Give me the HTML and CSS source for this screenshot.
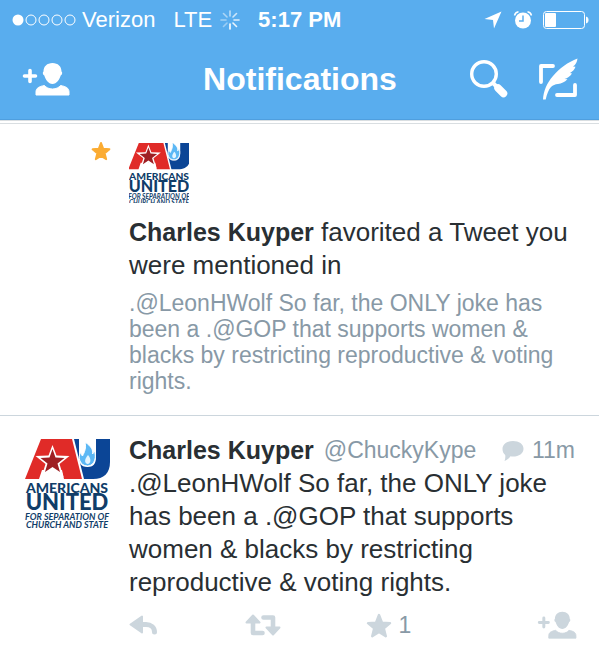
FILE: index.html
```html
<!DOCTYPE html>
<html lang="en">
<head>
<meta charset="utf-8">
<meta name="viewport" content="width=device-width, initial-scale=1">
<title>Notifications</title>
<link rel="stylesheet" href="styles.css">
</head>
<body>
<svg class="defs" aria-hidden="true">
  <symbol id="person-add" viewBox="0 0 48 34">
    <path d="M2.500 14H13.500M8 8.500V19.500" fill="none" stroke="currentColor" stroke-width="3.600" stroke-linecap="round"/>
    <path d="M30.500 1c5.500 0 9 3.500 9 8.500 1.200.5.800 3.500-.8 4-1.200 4-4 8.500-8.200 8.500s-7-4.500-8.200-8.500c-1.600-.5-2-3.500-.8-4 0-5 3.500-8.500 9-8.500z" fill="currentColor"/>
    <path d="M14 33v-3c0-4 3-5.500 8.500-6.500 1.500 2 4.500 3.500 8 3.500s6.500-1.500 8-3.500c5.500 1 8.500 2.500 8.500 6.500v3z" fill="currentColor" stroke="currentColor" stroke-width="1" stroke-linejoin="round"/>
  </symbol>
  <symbol id="star" viewBox="0 0 26 25">
    <path d="M13 2l3 7.600 8 .6-6.200 5.200 2 7.800L13 19l-6.800 4.200 2-7.800L2 10.200l8-.6z" fill="currentColor" stroke="currentColor" stroke-width="2.400" stroke-linejoin="round"/>
  </symbol>
</svg>

<header class="top">
  <div class="status">
    <svg class="signal" viewBox="0 0 64 12" aria-label="Signal"><circle cx="6" cy="6" r="5.500" fill="#fff"/><g fill="none" stroke="#fff"><circle cx="19" cy="6" r="5"/><circle cx="32" cy="6" r="5"/><circle cx="45" cy="6" r="5"/><circle cx="58" cy="6" r="5"/></g></svg>
    <span class="carrier">Verizon</span>
    <span class="network">LTE</span>
    <svg class="spinner" viewBox="0 0 20 20" aria-hidden="true"><g stroke="#fff" stroke-width="1.600" stroke-linecap="round"><path d="M10 14v5"/><path d="M13 13l3.500 3.500" opacity=".9"/><path d="M14 10h5" opacity=".8"/><path d="M13 7l3.500-3.500" opacity=".7"/><path d="M10 6V1" opacity=".6"/><path d="M7 7L3.500 3.500" opacity=".5"/><path d="M6 10H1" opacity=".45"/><path d="M7 13l-3.500 3.500" opacity=".4"/></g></svg>
    <time class="clock">5:17 PM</time>
    <svg class="location" viewBox="0 0 18 18" aria-hidden="true"><path d="M17.500.5L10 17.500 9 9 .5 8z" fill="#fff"/></svg>
    <svg class="alarm" viewBox="0 0 20 18" aria-hidden="true"><circle cx="10" cy="9.500" r="8" fill="#fff"/><path d="M1.500 4.500C2 2.500 3.500 1 5.500.8M18.500 4.500C18 2.500 16.500 1 14.500.8" fill="none" stroke="#fff" stroke-width="1.500"/><path d="M10 4.500V10H6" fill="none" stroke="#59adee" stroke-width="1.500"/></svg>
    <svg class="battery" viewBox="0 0 46 18" aria-label="Battery"><rect x=".5" y=".5" width="41" height="17" rx="3" fill="none" stroke="#fff"/><rect x="2" y="2" width="11" height="14" rx="1" fill="#fff"/><path d="M43.500 6c2 .5 2 5.500 0 6z" fill="#fff" stroke="#fff"/></svg>
  </div>
  <nav class="navbar">
    <button class="nav-button" aria-label="Find people"><svg class="nav-person"><use href="#person-add"/></svg></button>
    <h1>Notifications</h1>
    <div class="nav-actions">
      <button class="nav-button" aria-label="Search"><svg class="nav-search" viewBox="0 0 38 38"><circle cx="14" cy="14" r="12.300" fill="none" stroke="#fff" stroke-width="3.400"/><path d="M23 23l3 3" stroke="#fff" stroke-width="4"/><path d="M28 28l5.500 5.500" stroke="#fff" stroke-width="7.500" stroke-linecap="round"/></svg></button>
      <button class="nav-button" aria-label="Compose"><svg class="nav-compose" viewBox="0 0 40 42"><path d="M15 8H3v16M37 27v10H19" fill="none" stroke="#fff" stroke-width="3.800" stroke-linecap="round" stroke-linejoin="round"/><path d="M39.500.5C39 4 38 6.500 35 8.500l2.500.2c-1 2.800-3 4.800-5.500 6.300l2 .5c-2 3-4.500 4.500-7.500 5.500l3 .3c-3 3-6 4.200-9.500 4.700-3 .4-5 1-7 3-2.500 2.800-4 7-5.300 12.500H5c.5-8 3.500-16 10-23.500C21.500 10.500 30 4 39.500.5z" fill="#fff"/></svg></button>
    </div>
  </nav>
</header>

<main>
  <article class="item favorite">
    <svg class="gold-star" role="img" aria-label="Favorited"><use href="#star"/></svg>
    <div class="content">
      <svg class="avatar-small" viewBox="2 4 82 82" role="img" aria-label="Americans United"><use href="#au-logo"/></svg>
      <p class="headline"><strong>Charles Kuyper</strong> favorited a Tweet you were mentioned in</p>
      <p class="quote">.@LeonHWolf So far, the ONLY joke has been a .@GOP that supports women &amp; blacks by restricting reproductive &amp; voting rights.</p>
    </div>
  </article>

  <article class="item tweet">
    <svg class="avatar" viewBox="0 0 86 92" role="img" aria-label="Americans United">
      <g id="au-logo">
        <path d="M17 0H48L58 40H40L38 31H18L15 40H1z" fill="#e02b28"/>
        <path d="M50 0H55V18c0 7 3 10 8.500 10S72 25 72 18V0H86V23c0 11-6 17-17 17H60z" fill="#0b4596"/>
        <path d="M28.500 6l4 10.500 13 .5-10 8 4 13-11-7-11 7 4-13-10-8 13-.5z" fill="#fff"/>
        <path d="M28.500 10l3 8.500 9 .5-7 5.500 2.500 8.500-7.500-5-7.500 5 2.500-8.500-7-5.500 9-.5z" fill="#9e1f23"/>
        <path d="M61 3c7 5 8 8 7.500 12 1-1 1.500-2 1.500-4 3 6 1 16-6.500 16S53 18 57 13c0 2 .5 3 1.500 4 2-4 4-8 2.500-14z" fill="#5cb8f5" stroke="#fff"/>
        <path d="M64 16c3.500 4 3 8.500-.5 9-3.500-1-3-5 .5-9z" fill="#e4f5ff"/>
        <text class="logo-americans" x="43" y="54" text-anchor="middle">AMERICANS</text>
        <text class="logo-united" x="43" y="71" text-anchor="middle">UNITED</text>
        <text class="logo-small" x="43" y="81" text-anchor="middle">FOR SEPARATION OF</text>
        <text class="logo-small" x="43" y="89" text-anchor="middle">CHURCH AND STATE</text>
      </g>
    </svg>
    <div class="content">
      <div class="byline">
        <strong class="name">Charles Kuyper</strong>
        <span class="handle">@ChuckyKype</span>
        <svg class="bubble" viewBox="0 0 22 22" aria-hidden="true"><path d="M11 1c6 0 10.500 3 10.500 7.700S17 16.500 11 16.500c-1 0-2 0-2.500-.2C7 18.500 5 20 2.500 21c.8-2 1-4 .7-6C1.500 13.500.5 11.500.5 9 .5 4 5 1 11 1z" fill="#ccd6dd"/></svg>
        <time class="age">11m</time>
      </div>
      <p class="body">.@LeonHWolf So far, the ONLY joke has been a .@GOP that supports women &amp; blacks by restricting reproductive &amp; voting rights.</p>
      <div class="actions">
        <button class="action" aria-label="Reply"><svg class="reply" viewBox="0 0 28 20"><path d="M1.500 9.500L13 1.500v16z" fill="currentColor" stroke="currentColor" stroke-width="2" stroke-linejoin="round"/><path d="M12 9.500h5c5 0 8.500 3 8.500 7.500" fill="none" stroke="currentColor" stroke-width="5" stroke-linecap="round"/></svg></button>
        <button class="action" aria-label="Retweet"><svg class="retweet" viewBox="0 0 36 22"><path d="M1.500 8.500L8 1.500l6.500 7zM21.500 13.500h13l-6.500 7z" fill="currentColor" stroke="currentColor" stroke-width="2" stroke-linejoin="round"/><path d="M8 7v12h9.500M18.500 3.500H28V15" fill="none" stroke="currentColor" stroke-width="4.600" stroke-linecap="round" stroke-linejoin="round"/></svg></button>
        <button class="action" aria-label="Favorite, 1"><svg class="fav"><use href="#star"/></svg><span class="count">1</span></button>
        <button class="action" aria-label="Follow"><svg class="follow"><use href="#person-add"/></svg></button>
      </div>
    </div>
  </article>
</main>
</body>
</html>
```
FILE: styles.css
```css
* {
  box-sizing: border-box;
}

body {
  margin: 0;
  background: #fff;
  color: #292f33;
  font-family: "Liberation Sans", Arial, sans-serif;
}

.defs {
  position: absolute;
  width: 0;
  height: 0;
}

svg {
  display: block;
  flex: none;
}

h1,
p {
  margin: 0;
}

button {
  display: flex;
  align-items: center;
  margin: 0;
  padding: 0;
  border: 0;
  background: none;
  color: inherit;
  font: inherit;
}

/* Header */
.top {
  background: #59adee;
  color: #fff;
  border-bottom: 1px solid #4f9fdf;
}

.status {
  display: flex;
  align-items: center;
  height: 39px;
  padding: 0 10px 0 12px;
  font-size: 22px;
}

.signal {
  width: 64px;
  height: 12px;
}

.carrier {
  margin-left: 6px;
}

.network {
  margin-left: 18px;
}

.spinner {
  width: 20px;
  height: 20px;
  margin-left: 8px;
}

.clock {
  margin: 0 auto 0 18px;
  font-weight: bold;
}

.location {
  width: 18px;
  height: 18px;
}

.alarm {
  width: 20px;
  height: 18px;
  margin: 0 10px 0 11px;
}

.battery {
  width: 46px;
  height: 18px;
}

.navbar {
  display: grid;
  grid-template-columns: 1fr auto 1fr;
  align-items: center;
  height: 80px;
  padding: 0 21px 0 22px;
}

.navbar h1 {
  font-size: 32px;
  line-height: 40px;
}

.nav-person {
  width: 48px;
  height: 34px;
}

.nav-actions {
  display: flex;
  justify-content: flex-end;
  align-items: center;
  gap: 30px;
}

.nav-search {
  width: 38px;
  height: 38px;
}

.nav-compose {
  width: 40px;
  height: 42px;
}

/* Notification list */
main {
  border-top: 4px double #d9dee1;
}

.item {
  display: grid;
  grid-template-columns: 105px 1fr;
  padding: 0 22px 0 24px;
}

.favorite {
  padding-top: 19px;
  padding-bottom: 21px;
  border-bottom: 1px solid #ccd6dd;
}

.gold-star {
  justify-self: end;
  width: 20px;
  height: 20px;
  margin-right: 18px;
  margin-top: -2px;
  color: #fbac33;
}

.avatar-small {
  width: 60px;
  height: 60px;
}

.headline {
  margin-top: 13px;
  font-size: 26px;
  line-height: 33px;
}

.headline strong {
  font-size: 25px;
}

.quote {
  margin-top: 8px;
  color: #8899a6;
  font-size: 23px;
  line-height: 26px;
}

.tweet {
  padding-top: 18px;
}

.avatar {
  width: 86px;
  height: 92px;
  margin-top: 5px;
}

.byline {
  display: flex;
  align-items: center;
  line-height: 33px;
  color: #8899a6;
  font-size: 23px;
}

.name {
  color: #292f33;
  font-size: 25px;
}

.handle {
  margin-left: 10px;
}

.bubble {
  width: 22px;
  height: 22px;
  margin-left: auto;
}

.age {
  margin: 0 2px 0 8px;
}

.body {
  font-size: 26px;
  line-height: 33px;
}

.actions {
  display: grid;
  grid-template-columns: 26% 27% 1fr auto;
  align-items: center;
  margin-top: 12px;
  color: #ccd6dd;
}

.reply {
  width: 28px;
  height: 20px;
}

.retweet {
  width: 36px;
  height: 22px;
}

.fav {
  width: 26px;
  height: 25px;
}

.count {
  margin-left: 6px;
  color: #8899a6;
  font-size: 23px;
}

.follow {
  width: 40px;
  height: 28px;
}

/* Logo lettering */
.logo-americans,
.logo-united {
  fill: #103d69;
  font-family: Lato, sans-serif;
  font-weight: 900;
}

.logo-americans {
  font-size: 14px;
}

.logo-united {
  font-size: 22px;
}

.logo-small {
  fill: #103d69;
  font-family: Lato, sans-serif;
  font-size: 9px;
  font-style: italic;
  font-weight: 700;
}
```
